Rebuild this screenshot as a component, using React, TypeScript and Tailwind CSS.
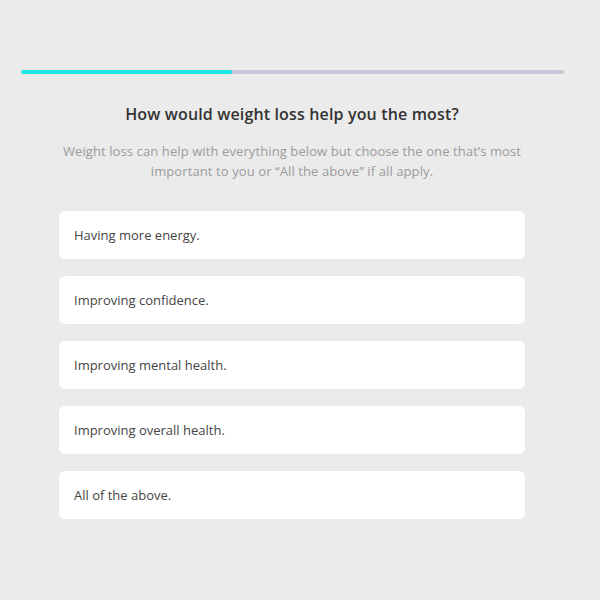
const options = [
  "Having more energy.",
  "Improving confidence.",
  "Improving mental health.",
  "Improving overall health.",
  "All of the above.",
];

const App = () => {
  const progress = 38.9;

  return (
    <div
      className="min-h-screen w-full bg-[#ebebeb] pt-[70px]"
      style={{ fontFamily: '"Open Sans", "Noto Sans", sans-serif' }}
    >
      <div className="w-[584px]">
        <div className="ml-[21px] h-[4px] w-[543px] rounded-full bg-[#c5cad8] overflow-hidden">
          <div className="h-full bg-[#1de6e6] rounded-full" style={{ width: `${progress}%` }} />
        </div>

        <div className="flex flex-col items-center">
          <h1 className="mt-[28px] text-[16px] leading-[24px] font-semibold tracking-[0.15px] text-[#333333]">
            How would weight loss help you the most?
          </h1>
          <p className="mt-[15px] w-[480px] text-center text-[13px] leading-[20px] tracking-[0.1px] text-[#9b9b9b]">
            Weight loss can help with everything below but choose the one that’s most important to you or “All the above” if all apply.
          </p>

          <div className="mt-[30px] flex w-[466px] flex-col gap-[17px]">
            {options.map((o) => (
              <button
                key={o}
                className="flex h-[48px] items-center rounded-[6px] bg-white px-[15px] pt-[2px] text-left text-[13px] text-[#454545]"
              >
                {o}
              </button>
            ))}
          </div>
        </div>
      </div>
    </div>
  );
};

export default App;
